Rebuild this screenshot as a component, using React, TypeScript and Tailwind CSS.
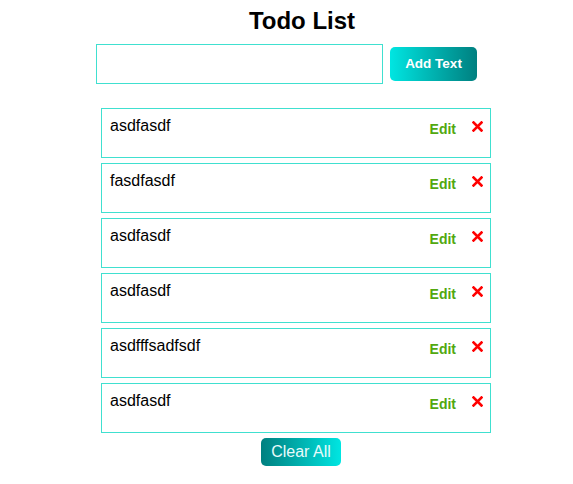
import React, { useState } from 'react';

const INITIAL = ['asdfasdf', 'fasdfasdf', 'asdfasdf', 'asdfasdf', 'asdfffsadfsdf', 'asdfasdf'];

const RedX = () => (
  <svg width="11" height="11" viewBox="0 0 11 11">
    <path d="M1.5 1.5 L9.5 9.5 M9.5 1.5 L1.5 9.5" stroke="#ff0000" strokeWidth="2.6" strokeLinecap="square" />
  </svg>
);

const App = () => {
  const [todos, setTodos] = useState(INITIAL);
  const [text, setText] = useState('');

  return (
    <div className="min-h-screen bg-white font-['Liberation_Sans',Arial,sans-serif] text-black">
      <div className="ml-[96px] w-[395px] pt-[5px]">
        {/* Title */}
        <h1 className="pl-[17px] text-center text-[24px] leading-[32px] font-bold">Todo List</h1>

        {/* Input row */}
        <div className="mt-[7px] flex items-center gap-[7px]">
          <input
            value={text}
            onChange={(e) => setText(e.target.value)}
            className="h-[40px] w-[287px] border border-[#40e0d0] px-2 outline-none"
          />
          <button
            onClick={() => {
              if (text.trim()) setTodos([...todos, text]);
              setText('');
            }}
            className="h-[34px] w-[87px] rounded-[5px] bg-gradient-to-r from-[#00e6e2] to-[#008080] text-[13.5px] font-bold text-white"
          >
            Add Text
          </button>
        </div>

        {/* List */}
        <div className="mt-[24px] flex flex-col gap-[5px] pl-[5px]">
          {todos.map((todo, i) => (
            <div
              key={i}
              className="flex h-[50px] w-[390px] items-start justify-between border border-[#40e0d0] pl-[8px] pr-[7px] pt-[5px]"
            >
              <span className="text-[16px] leading-[24px]">{todo}</span>
              <div className="mt-[7px] flex items-center gap-[16px]">
                <button className="text-[14px] leading-[16px] font-bold text-[#52a80f]">Edit</button>
                <button onClick={() => setTodos(todos.filter((_, j) => j !== i))} className="mb-[5px]">
                  <RedX />
                </button>
              </div>
            </div>
          ))}
        </div>

        {/* Clear */}
        <div className="mt-[5px] flex justify-center pl-[15px]">
          <button
            onClick={() => setTodos([])}
            className="h-[28px] w-[80px] rounded-[5px] bg-gradient-to-r from-[#008080] to-[#00e6e2] text-[16px] text-[#e8fbfb]"
          >
            Clear All
          </button>
        </div>
      </div>
    </div>
  );
};

export default App;
